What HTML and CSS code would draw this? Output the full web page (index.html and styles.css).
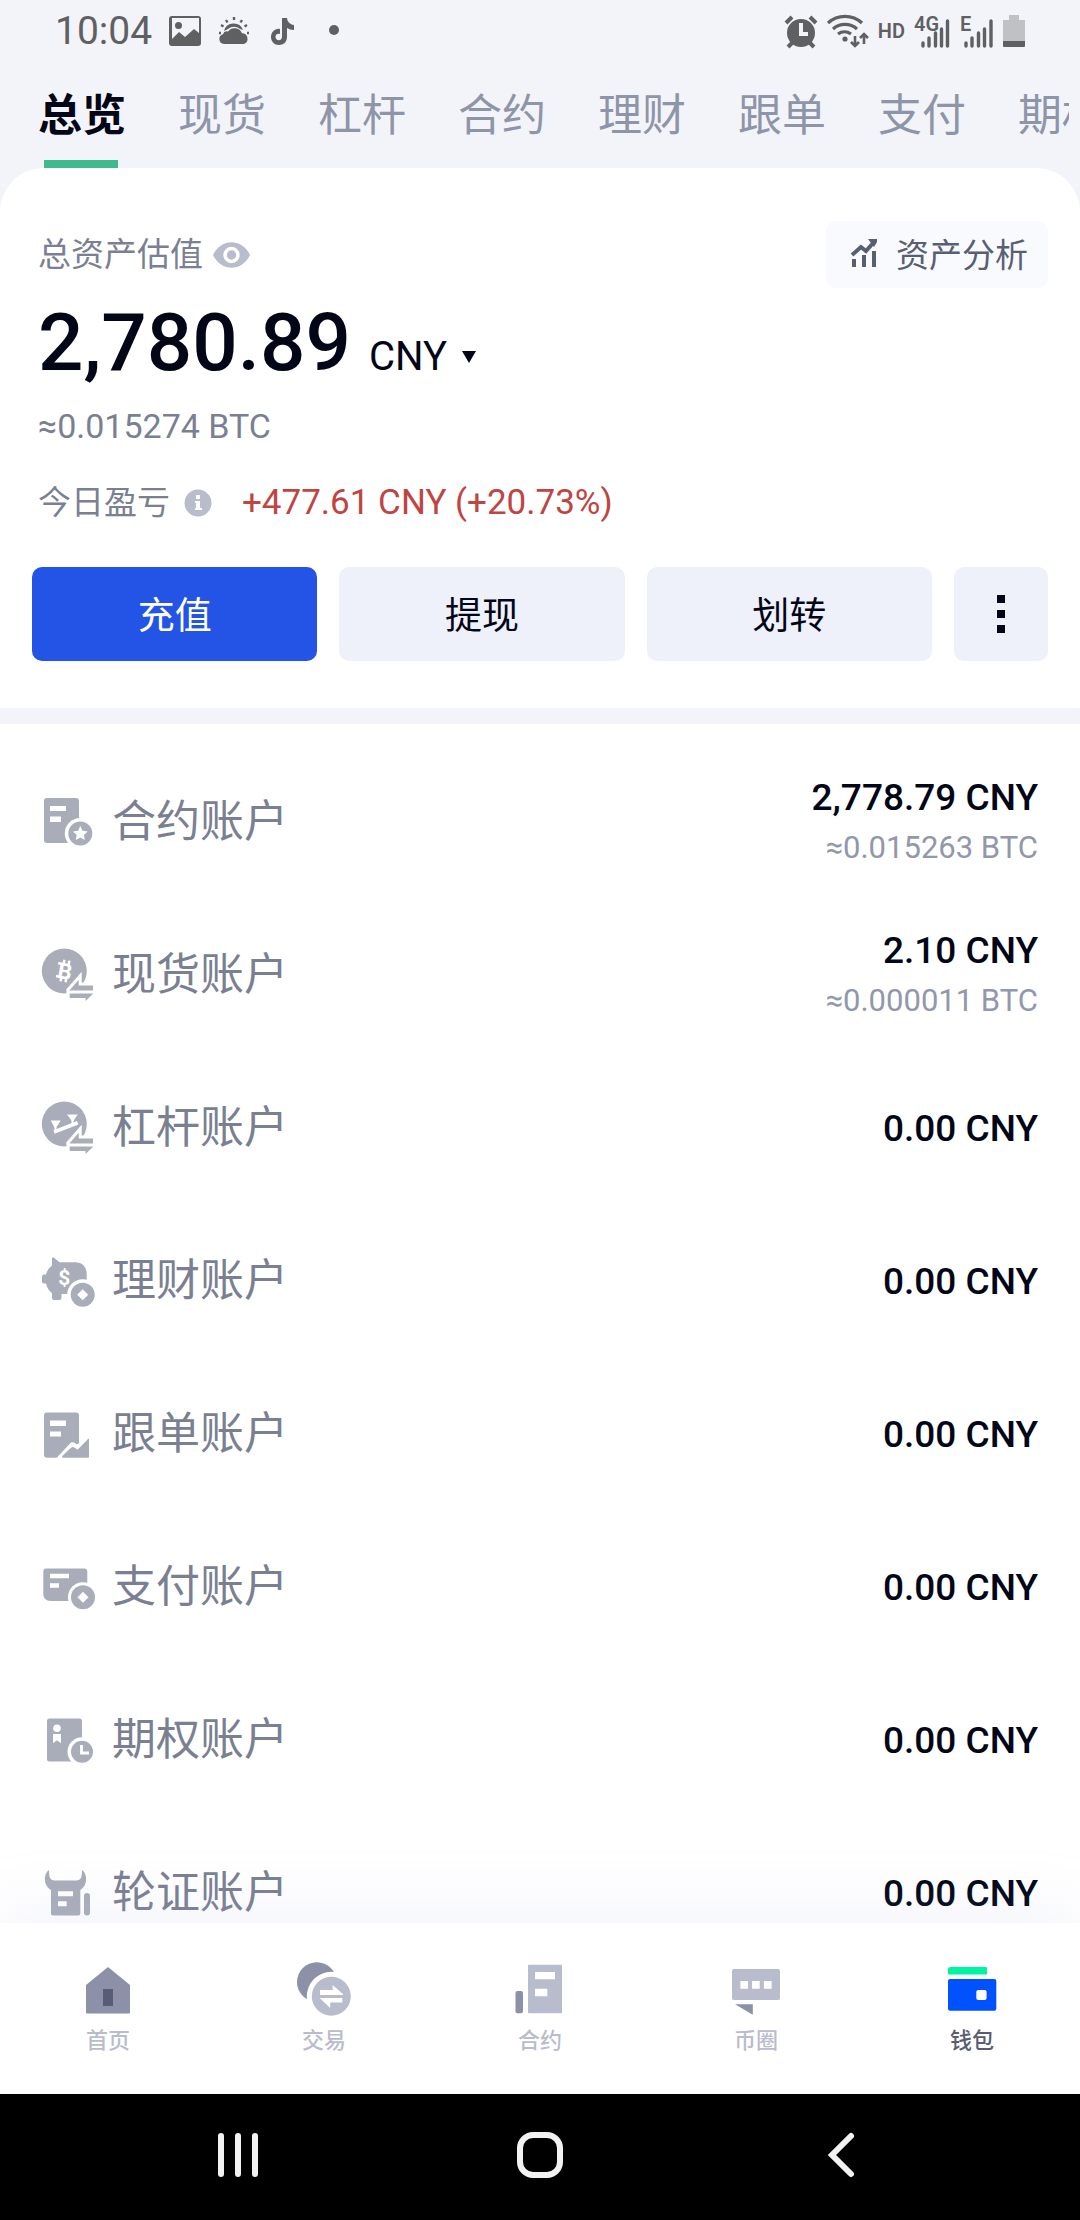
FILE: index.html
```html
<!DOCTYPE html>
<html lang="zh-CN">
<head>
<meta charset="utf-8">
<meta name="viewport" content="width=device-width, initial-scale=1">
<title>钱包</title>
<link rel="stylesheet" href="styles.css">
</head>
<body>
<div class="app">
  <header class="status">
    <div class="status-group status-left">
      <span class="clock">10:04</span>
      <svg width="32" height="32" viewBox="0 0 32 32"><path fill-rule="evenodd" d="M3 1h26a3 3 0 0 1 3 3v24a3 3 0 0 1-3 3H3a3 3 0 0 1-3-3V4a3 3 0 0 1 3-3zm0 2v21l7-7 6 5 9-8 5 4V3zm6.500 4a3.500 3.500 0 1 1 0 7 3.500 3.500 0 0 1 0-7z"/></svg>
      <svg width="32" height="32" viewBox="0 0 32 32"><path d="M6 29a5 5 0 0 1-1-9.800 4 4 0 0 1 5-2.600 8 8 0 0 1 14 1.600A5.600 5.600 0 0 1 26 29z"/><path d="M6 16a10 10 0 0 1 19-1l-3-1a9 9 0 0 0-12 0z"/><path class="line" stroke-width="2.400" d="M16 2v3M8 5l1.500 2.500M24 5l-1.500 2.500M3 10l2.500 1.500M29 10l-2.500 1.500M1 18h2M29 18h2"/></svg>
      <svg width="32" height="32" viewBox="0 0 32 32"><path d="M15 3h5c.4 4 3 6.500 7 7v5c-3 0-5-.8-7-2v9c0 5-3.500 8-8 8s-8-3.500-8-8 4-9 9-8v5c-2.500-.7-4.500.6-4.500 3 0 1.800 1.500 3.200 3.300 3.200 2 0 3.200-1.400 3.200-3.700z"/></svg>
      <svg width="32" height="32" viewBox="0 0 32 32"><circle cx="18" cy="15" r="5"/></svg>
    </div>
    <div class="status-group status-right">
      <svg width="34" height="34" viewBox="0 0 34 34"><path fill-rule="evenodd" d="M17 5a14 14 0 1 1 0 28 14 14 0 0 1 0-28zm-2 4v13h9v-4h-5V9z"/><path class="line" stroke-width="4" d="M2 9l6-6M32 9l-6-6M4 33l5-5M30 33l-5-5"/></svg>
      <svg width="42" height="34" viewBox="0 0 42 34"><path class="line" stroke-width="3.200" d="M1 9a25 25 0 0 1 34 0M6 15a18 18 0 0 1 24 0M11 20a11 11 0 0 1 13 0"/><circle cx="18" cy="25" r="2.600"/><path class="line" stroke-width="2.600" d="M28 22v10M24 28l4 4 4-4M37 30V20M33 24l4-4 4 4"/></svg>
      <span class="hd">HD</span>
      <svg width="37" height="34" viewBox="0 0 37 34"><text x="0" y="17">4G</text><path class="line" stroke-width="3.400" stroke-linecap="round" d="M9 29v3M15 24v8M21.500 19v13M27.500 15v17M33.500 7v25"/></svg>
      <svg width="34" height="34" viewBox="0 0 34 34"><text x="0" y="17">E</text><path class="line" stroke-width="3.400" stroke-linecap="round" d="M6 29v3M12 24v8M18.500 19v13M24.500 15v17M31 7v25"/></svg>
      <svg class="battery" width="22" height="34" viewBox="0 0 22 34"><path opacity=".35" d="M6 1h10v5h6v21H0V6h6z"/><path d="M0 27h22v5a1 1 0 0 1-1 1H1a1 1 0 0 1-1-1z"/></svg>
    </div>
  </header>

  <nav class="tabs" aria-label="账户类型">
    <a class="tab tab-active" href="#overview">总览</a>
    <a class="tab" href="#spot">现货</a>
    <a class="tab" href="#margin">杠杆</a>
    <a class="tab" href="#futures">合约</a>
    <a class="tab" href="#earn">理财</a>
    <a class="tab" href="#copy">跟单</a>
    <a class="tab" href="#pay">支付</a>
    <a class="tab" href="#options">期权</a>
  </nav>

  <main class="content">
    <section class="summary">
      <div class="summary-head">
        <span class="caption">总资产估值</span>
        <button class="icon-button" type="button" aria-label="隐藏金额">
          <svg width="37" height="26" viewBox="0 0 37 26"><path fill="#b8bccc" d="M0 13C8-4 29-4 37 13 29 30 8 30 0 13z"/><circle cx="18.500" cy="13" r="6.500" fill="#b8bccc" stroke="#fff" stroke-width="3.500"/></svg>
        </button>
        <button class="analysis" type="button">
          <svg width="28" height="28" viewBox="0 0 28 28"><path fill="#585f74" d="M2 20h4v8H2zm10-4h4v12h-4zm10-4h4v16h-4zM18 0h9v3l-3 5z"/><path fill="none" stroke="#585f74" stroke-width="4" d="M2 16l9-8 5 4 8-9"/></svg>
          资产分析
        </button>
      </div>
      <div class="total">
        <strong class="amount">2,780.89</strong>
        <label class="currency">
          <select class="currency-select" aria-label="计价货币"><option>CNY</option></select>
          <svg width="14" height="12" viewBox="0 0 14 12"><path fill="#020617" d="M0 0h14L7 12z"/></svg>
        </label>
      </div>
      <p class="btc">≈0.015274 BTC</p>
      <div class="pnl">
        <span class="caption">今日盈亏</span>
        <button class="icon-button" type="button" aria-label="说明">
          <svg width="28" height="28" viewBox="0 0 28 28"><circle cx="14" cy="14" r="13.500" fill="#b8bccc"/><path fill="#fff" d="M12 6h4v4h-4zm-1 6h5v7h2v2h-7v-2h1v-5h-1z"/></svg>
        </button>
        <span class="gain">+477.61 CNY (+20.73%)</span>
      </div>
      <div class="actions">
        <button class="action action-primary" type="button">充值</button>
        <button class="action" type="button">提现</button>
        <button class="action" type="button">划转</button>
        <button class="action action-more" type="button" aria-label="更多">
          <svg width="8" height="38" viewBox="0 0 8 38"><path fill="#020617" d="M0 0h8v8H0zm0 15h8v8H0zm0 15h8v8H0z"/></svg>
        </button>
      </div>
    </section>

    <ul class="accounts">
      <li class="account">
        <svg class="account-icon" viewBox="0 0 56 56"><rect x="4" y="5" width="35" height="45" rx="3"/><path class="cut" d="M10 13h16v5H10zm0 10.500h11V29H10z"/><circle class="cut" cx="40.300" cy="40.500" r="15.500"/><circle cx="40.300" cy="40.500" r="12"/><path class="cut" d="M40.300 33l2.200 4.700 5.100.7-3.700 3.600.9 5.100-4.500-2.500-4.500 2.500.9-5.100-3.700-3.600 5.100-.7z"/></svg>
        <span class="account-name">合约账户</span>
        <div class="balance"><span class="value">2,778.79 CNY</span><span class="approx">≈0.015263 BTC</span></div>
      </li>
      <li class="account">
        <svg class="account-icon" viewBox="0 0 56 56"><circle cx="24.300" cy="25" r="22.500"/><g transform="rotate(10 25 25)"><text class="coin" x="25" y="33" text-anchor="middle">B</text><path class="cut-line" stroke-width="2.500" d="M22.500 14v5M27.500 14v5M22.500 31v5M27.500 31v5M17 18.500h4M17 31.500h4"/></g><path class="ring" d="M29.300 44.500l9.400-10.700v5.700H53V55H30z"/><path d="M29.300 44.500l9.400-10.700v5.700H53v5zM29.700 47.500h23.600L45.600 55v-3H29.700z"/></svg>
        <span class="account-name">现货账户</span>
        <div class="balance"><span class="value">2.10 CNY</span><span class="approx">≈0.000011 BTC</span></div>
      </li>
      <li class="account">
        <svg class="account-icon" viewBox="0 0 56 56"><circle cx="24.300" cy="25" r="22.500"/><path class="cut" d="M10.700 21.500h10L15.300 30zm16.300-6h10.700l-5 7.500z"/><path class="cut-line" stroke-width="3.600" d="M14 33l23.700-9.200"/><path class="cut-line" stroke-width="2" d="M15.500 28v5M32.500 21v5"/><path class="ring" d="M29.300 44.500l9.400-10.700v5.700H53V55H30z"/><path d="M29.300 44.500l9.400-10.700v5.700H53v5zM29.700 47.500h23.600L45.600 55v-3H29.700z"/></svg>
        <span class="account-name">杠杆账户</span>
        <div class="balance"><span class="value">0.00 CNY</span></div>
      </li>
      <li class="account">
        <svg class="account-icon" viewBox="0 0 56 56"><path d="M12 6.500c0-1.500 1-1.700 2-.8l5.500 4.500H35c8 0 11.700 5 11.700 12V36L36 42H21.500v4a2 2 0 0 1-2 2H14a2 2 0 0 1-2-2v-5c-3-2-5-5-6-9.500H4a2 2 0 0 1-2-2v-5a2 2 0 0 1 2-2h2c1-4 3-6.500 6-9z"/><text class="dollar" x="24.300" y="33" text-anchor="middle">$</text><circle class="cut" cx="42.700" cy="42.800" r="15.500"/><circle cx="42.700" cy="42.800" r="12"/><path class="cut" d="M42.700 37.300l5.500 5.500-5.500 5.500-5.500-5.500z"/></svg>
        <span class="account-name">理财账户</span>
        <div class="balance"><span class="value">0.00 CNY</span></div>
      </li>
      <li class="account">
        <svg class="account-icon" viewBox="0 0 56 56"><rect x="4" y="7.500" width="35" height="45.300" rx="3"/><path class="cut" d="M10 15.500h16V21H10zm0 11h11v5H10z"/><path class="cut" d="M16.500 53L30 38.500c2-2 4-1.500 7 1l2-1.500v15z"/><path d="M23 52.800c-1 0-1.300-1-.5-2l8.500-8c1.500-1.400 3-.8 6.500 2L48 34c.6-.5 1-.3 1 .5v17.300a1 1 0 0 1-1 1z"/></svg>
        <span class="account-name">跟单账户</span>
        <div class="balance"><span class="value">0.00 CNY</span></div>
      </li>
      <li class="account">
        <svg class="account-icon" viewBox="0 0 56 56"><path d="M6 10.500h38.300a3 3 0 0 1 3 3V43H11c-5 0-7.700-3-7.700-7V13.500a3 3 0 0 1 2.700-3z"/><path class="cut" d="M10 15.800h19v4.500H10zm0 9.400h9v4.500h-9z"/><circle class="cut" cx="43" cy="39.200" r="15"/><circle cx="43" cy="39.200" r="12"/><path class="cut" d="M43 33.700l5.500 5.500-5.500 5.500-5.500-5.500z"/></svg>
        <span class="account-name">支付账户</span>
        <div class="balance"><span class="value">0.00 CNY</span></div>
      </li>
      <li class="account">
        <svg class="account-icon" viewBox="0 0 56 56"><rect x="7" y="7.500" width="35" height="43" rx="2.500"/><circle class="cut" cx="17" cy="17.200" r="3.800"/><path class="cut" d="M13 23h8v9.300l-4-3-4 3z"/><circle class="cut" cx="42" cy="40.800" r="14.500"/><circle cx="42" cy="40.800" r="11"/><path class="cut-line" stroke-width="2.800" d="M41.500 34v8H49"/></svg>
        <span class="account-name">期权账户</span>
        <div class="balance"><span class="value">0.00 CNY</span></div>
      </li>
      <li class="account">
        <svg class="account-icon" viewBox="0 0 56 56"><path d="M9 6c0 7 1 10.500 5.500 10.500h22C41 16.500 42 13 42 6c5 3 6.500 15-1.700 20v23.500a2 2 0 0 1-2 2H13a2 2 0 0 1-2-2V26C2.500 21 4 9 9 6z"/><path class="cut" d="M18 27.200h15v5H18zm0 10h8.700v5H18z"/><rect x="44" y="29" width="6" height="22.500" rx="3"/></svg>
        <span class="account-name">轮证账户</span>
        <div class="balance"><span class="value">0.00 CNY</span></div>
      </li>
    </ul>
  </main>

  <nav class="bottom" aria-label="主导航">
    <a class="bottom-item" href="#home">
      <svg width="56" height="56" viewBox="0 0 56 56"><path fill="#8c91a7" d="M28 5l22 18v27.500a1 1 0 0 1-1 1H7a1 1 0 0 1-1-1V23z"/><path fill="#585c74" d="M23 27h10v17H23z"/></svg>
      首页
    </a>
    <a class="bottom-item" href="#trade">
      <svg width="56" height="56" viewBox="0 0 56 56"><circle cx="20.800" cy="20" r="19.800" fill="#8c91a7"/><circle cx="35.300" cy="34.300" r="24.500" fill="#fff"/><circle cx="35.300" cy="34.300" r="19.500" fill="#b8bccc"/><path fill="#fff" d="M24 28h12.600v-5L47 32v1H24zM23.600 36h22.700v4.500H34.200V46z"/></svg>
      交易
    </a>
    <a class="bottom-item" href="#contract">
      <svg width="56" height="56" viewBox="0 0 56 56"><rect x="3.500" y="29" width="7.500" height="22.300" rx="2" fill="#8c91a7"/><rect x="16" y="2.700" width="34" height="48.600" rx="1" fill="#b8bccc"/><path fill="#fff" d="M23 10h20v7.300H23zm0 16.700h12.300v7.600H23z"/></svg>
      合约
    </a>
    <a class="bottom-item" href="#community">
      <svg width="56" height="56" viewBox="0 0 56 56"><rect x="4" y="7" width="48" height="31" rx="2" fill="#b8bccc"/><path fill="#fff" d="M12.400 19H20v7.700h-7.600zm11.700 0h7.600v7.700h-7.600zm11.800 0h7.700v7.700h-7.700z"/><path fill="#8c91a7" d="M7 42.300h17.800v10.400z"/></svg>
      币圈
    </a>
    <a class="bottom-item bottom-item-active" href="#wallet" aria-current="page">
      <svg width="56" height="56" viewBox="0 0 56 56"><path fill="#00f3a0" d="M6.500 5H42a1 1 0 0 1 1 1v6.500H4V7.500A2.500 2.500 0 0 1 6.500 5z"/><rect x="4" y="17" width="48.300" height="31.700" rx="2" fill="#0052ff"/><rect x="32.300" y="28" width="10.300" height="10" rx="2" fill="#fff"/></svg>
      钱包
    </a>
  </nav>

  <footer class="system">
    <button class="system-button" type="button" aria-label="最近任务"><svg width="48" height="48" viewBox="0 0 48 48"><path stroke-width="6" stroke-linecap="round" d="M7 5v38M24 5v38M41 5v38"/></svg></button>
    <button class="system-button" type="button" aria-label="主屏幕"><svg width="48" height="48" viewBox="0 0 48 48"><rect x="4" y="4" width="40" height="40" rx="13" stroke-width="6"/></svg></button>
    <button class="system-button" type="button" aria-label="返回"><svg width="48" height="48" viewBox="0 0 48 48"><path stroke-width="6" stroke-linecap="round" d="M33 5L14 24l19 19"/></svg></button>
  </footer>
</div>
</body>
</html>
```

FILE: styles.css
```css
* {
  box-sizing: border-box;
}

body {
  margin: 0;
  background: #f3f4f9;
  color: #020617;
  font-family: Roboto, "Noto Sans CJK SC", sans-serif;
}

button,
select {
  margin: 0;
  padding: 0;
  border: 0;
  background: none;
  color: inherit;
  font: inherit;
}

a {
  color: inherit;
  text-decoration: none;
}

svg {
  display: block;
  flex: none;
  overflow: visible;
}

.app {
  display: flex;
  flex-direction: column;
  height: 100vh;
  overflow: hidden;
}

/* Status bar */
.status {
  display: flex;
  justify-content: space-between;
  align-items: center;
  height: 62px;
  padding: 0 55px;
  color: #5f6062;
  fill: #5f6062;
}

.status-group {
  display: flex;
  align-items: center;
}

.status-left {
  gap: 17px;
}

.status-right {
  gap: 9px;
}

.clock {
  font-size: 39px;
  line-height: 64px;
}

.hd {
  font-size: 20px;
  font-weight: 600;
  line-height: 30px;
}

.status text {
  font-size: 20px;
  font-weight: 600;
}

.line {
  fill: none;
  stroke: #5f6062;
}

/* Account tabs */
.tabs {
  display: flex;
  gap: 52px;
  height: 106px;
  margin-right: 11px;
  padding-left: 38px;
  overflow: hidden;
  color: #8f95a9;
  font-size: 44px;
  line-height: 108px;
  white-space: nowrap;
}

.tab-active {
  position: relative;
  color: #020617;
  font-weight: 700;
}

.tab-active::after {
  content: "";
  position: absolute;
  right: 8px;
  bottom: 0;
  left: 6px;
  height: 8px;
  background: #41b98f;
}

/* Overview */
.content {
  display: flex;
  flex: 1;
  flex-direction: column;
  min-height: 0;
  border-radius: 44px 44px 0 0;
  background: #fff;
  overflow: hidden;
}

.summary {
  flex: none;
  padding: 53px 32px 47px;
  border-bottom: 16px solid #f3f4f9;
}

.summary-head,
.pnl {
  display: flex;
  align-items: center;
  padding-left: 6px;
}

.caption {
  color: #7a7f92;
  font-size: 33px;
  line-height: 40px;
}

.icon-button {
  margin-left: 10px;
}

.analysis {
  display: flex;
  align-items: center;
  gap: 18px;
  height: 67px;
  margin-left: auto;
  padding: 0 20px 3px 24px;
  border-radius: 10px;
  background: #f9fafe;
  color: #585f74;
  font-size: 33px;
}

.total {
  display: flex;
  align-items: baseline;
  gap: 18px;
  margin-top: 7px;
  padding-left: 6px;
}

.amount {
  font-size: 80px;
  font-weight: 500;
  line-height: 96px;
}

.currency {
  display: flex;
  align-items: center;
  gap: 14px;
}

.currency-select {
  appearance: none;
  font-size: 40px;
  line-height: 48px;
}

.btc {
  margin: 15px 0 0;
  padding-left: 6px;
  color: #7a7f92;
  font-size: 34px;
  line-height: 40px;
}

.pnl {
  margin-top: 37px;
}

.pnl .icon-button {
  margin-left: 14px;
}

.gain {
  margin-left: 30px;
  color: #c04442;
  font-size: 35px;
  line-height: 40px;
}

.actions {
  display: flex;
  gap: 22px;
  margin-top: 44px;
}

.action {
  display: flex;
  flex: 1;
  align-items: center;
  justify-content: center;
  height: 94px;
  padding-bottom: 3px;
  border-radius: 10px;
  background: #eef0fa;
  font-size: 37px;
}

.action-primary {
  background: #2354e6;
  color: #fff;
}

.action-more {
  flex: 0 0 94px;
  padding-bottom: 0;
}

/* Account list */
.accounts {
  flex: 1;
  min-height: 0;
  margin: 0;
  padding: 20px 42px 0 40px;
  overflow: hidden;
  list-style: none;
}

.account {
  display: flex;
  align-items: center;
  height: 153px;
}

.account-icon {
  width: 56px;
  height: 56px;
  fill: #a9adb9;
}

.cut,
.coin,
.dollar {
  fill: #fff;
}

.cut-line {
  fill: none;
  stroke: #fff;
}

.ring {
  fill: #fff;
  stroke: #fff;
  stroke-width: 6px;
}

.coin {
  font-size: 22px;
  font-weight: 700;
}

.dollar {
  font-size: 21px;
  font-weight: 700;
}

.account-name {
  margin-left: 16px;
  padding-top: 3px;
  color: #7a7f92;
  font-size: 44px;
  line-height: 56px;
}

.balance {
  display: flex;
  flex-direction: column;
  align-items: flex-end;
  gap: 2px;
  margin-left: auto;
  padding-top: 5px;
}

.value {
  font-size: 37px;
  font-weight: 500;
  line-height: 48px;
}

.approx {
  color: #9297aa;
  font-size: 31px;
  line-height: 48px;
}

/* Bottom navigation */
.bottom {
  z-index: 1;
  display: grid;
  flex: none;
  grid-template-columns: repeat(5, 1fr);
  padding: 39px 0 38px;
  background: #fff;
  box-shadow: 0 -4px 72px rgba(170, 180, 225, 0.18);
}

.bottom-item {
  display: flex;
  flex-direction: column;
  align-items: center;
  gap: 8px;
  color: #b8bccc;
  font-size: 22px;
  font-weight: 500;
  line-height: 30px;
}

.bottom-item-active {
  color: #585c74;
}

.system {
  z-index: 2;
  display: grid;
  flex: none;
  grid-template-columns: repeat(3, 1fr);
  height: 126px;
  padding: 0 8%;
  background: #000;
  fill: none;
  stroke: #f2f2f2;
}

.system-button {
  display: flex;
  align-items: center;
  justify-content: center;
  padding-bottom: 4px;
}
```
